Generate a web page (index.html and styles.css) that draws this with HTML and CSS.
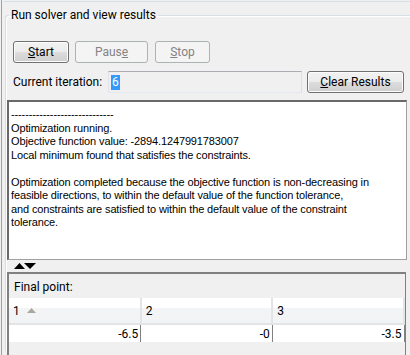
FILE: index.html
```html
<!DOCTYPE html>
<html>
<head>
<meta charset="utf-8">
<link rel="stylesheet" href="styles.css">
</head>
<body>
<div class="frame">
  <div class="topline"></div>
  <fieldset class="group">
    <legend class="legend">Run solver and view results</legend>
    <div class="buttons">
      <button class="btn start"><u>S</u>tart</button>
      <button class="btn pause" disabled>Paus<u>e</u></button>
      <button class="btn stop" disabled><u>S</u>top</button>
    </div>
    <div class="iter-row">
      <span class="iter-label">Current iteration:</span>
      <div class="field"><span class="sel">6</span></div>
      <button class="btn clear"><u>C</u>lear Results</button>
    </div>
    <div class="output">
      <div class="log">-----------------------------
Optimization running.
Objective function value: -2894.1247991783007
Local minimum found that satisfies the constraints.

Optimization completed because the objective function is non-decreasing in
feasible directions, to within the default value of the function tolerance,
and constraints are satisfied to within the default value of the constraint
tolerance.</div>
    </div>
    <div class="splitter">
      <svg width="23" height="6" viewBox="0 0 23 6"><path d="M0 6 L5.5 0 L11 6 Z" fill="#000"/><path d="M10 0 L22 0 L16 6 Z" fill="#000"/></svg>
    </div>
    <div class="lower">
      <div class="final-label">Final point:</div>
      <table class="grid">
        <thead>
          <tr>
            <th>1<svg class="sort" width="9" height="5" viewBox="0 0 9 5"><path d="M0 5 L4.5 0 L9 5 Z" fill="#aaa89c"/></svg></th>
            <th>2</th>
            <th>3</th>
          </tr>
        </thead>
        <tbody>
          <tr>
            <td>-6.5</td>
            <td>-0</td>
            <td>-3.5</td>
          </tr>
        </tbody>
      </table>
    </div>
  </fieldset>
</div>
</body>
</html>
```

FILE: styles.css
```css
html, body {
  margin: 0;
  padding: 0;
  background: #f0f0f0;
  width: 410px;
  height: 355px;
  overflow: hidden;
}
.frame {
  height: 355px;
  border-left: 1px solid #a0a0a0;
  margin-left: 1px;
  box-sizing: border-box;
  font-family: Roboto, sans-serif;
  font-size: 12px;
  color: #000;
  overflow: hidden;
}
.topline {
  height: 1px;
  margin-top: 1px;
  margin-left: 2px;
  background: #d5dfe5;
}
.group {
  margin: 5px 0 0 3px;
  padding: 0;
  border: 1px solid #d5dfe5;
  border-right: none;
  border-bottom: none;
  border-radius: 3px 0 0 0;
  box-shadow: inset 1px 1px 0 #fff;
  min-width: 0;
  height: 344px;
  box-sizing: border-box;
}
.legend {
  padding: 0 2px;
  margin-left: 3px;
  font-size: 12px;
  line-height: 16px;
}
.buttons {
  display: flex;
  margin: 18px 0 0 7px;
}
.btn {
  font-family: Roboto, sans-serif;
  font-size: 12px;
  height: 22px;
  padding: 0;
  border: 1px solid #707070;
  border-radius: 3px;
  background: linear-gradient(#f2f2f2 0%, #ebebeb 50%, #dddddd 51%, #cfcfcf 100%);
  color: #000;
  box-shadow: inset 0 0 0 1px #fcfcfc;
}
.btn:disabled {
  border-color: #adb2b5;
  background: #f4f4f4;
  color: #838383;
  box-shadow: none;
}
.start { width: 56px; }
.pause { width: 73px; margin-left: 6px; }
.stop { width: 55px; margin-left: 7px; }
.iter-row {
  display: flex;
  align-items: center;
  margin: 8px 0 0 7px;
  height: 22px;
}
.iter-label {
  width: 95px;
  white-space: nowrap;
}
.field {
  width: 190px;
  height: 20px;
  border: 1px solid #abadb3;
  border-color: #abadb3 #dbdfe6 #e3e9ef #e2e3ea;
  background: #f0f0f0;
  display: flex;
  align-items: center;
  padding-left: 2px;
}
.sel {
  background: #3399ff;
  color: #fff;
  line-height: 15px;
  padding: 0 1px;
}
.clear {
  width: 97px;
  margin-left: 5px;
}
.output {
  margin: 7px 0 0 1px;
  width: 400px;
  height: 160px;
  box-sizing: border-box;
  background: #fff;
  border-style: solid;
  border-width: 2px 1px 1px 2px;
  border-color: #696969 #a0a0a0 #a0a0a0 #696969;
  padding: 6px 0 0 2px;
}
.log {
  font-family: "Liberation Sans", sans-serif;
  font-size: 11px;
  letter-spacing: -0.13px;
  line-height: 13.5px;
  white-space: pre;
}
.splitter {
  height: 12px;
  padding-left: 8px;
  display: flex;
  align-items: center;
}
.lower {
  margin-left: 1px;
  width: 399px;
  height: 90px;
  box-sizing: border-box;
  border-top: 2px solid #808080;
  border-left: 2px solid #808080;
  border-right: 1px solid #808080;
  background: #f0f0f0;
}
.final-label {
  height: 24px;
  line-height: 27px;
  padding-left: 5px;
}
.grid {
  border-collapse: collapse;
  width: 396px;
  table-layout: fixed;
  background: #fff;
}
.grid th {
  height: 25px;
  padding: 0 0 0 4px;
  text-align: left;
  font-weight: normal;
  background: linear-gradient(#ffffff 0%, #ffffff 40%, #f3f4f6 41%, #f2f3f5 100%);
  border-right: 2px solid #e3e4e6;
  border-bottom: 2px solid #e3e4e6;
}
.grid td {
  height: 17px;
  padding: 0 2px 0 0;
  text-align: right;
  border-right: 1px solid #808080;
}
.sort {
  margin-left: 7px;
  vertical-align: 2px;
}
```
